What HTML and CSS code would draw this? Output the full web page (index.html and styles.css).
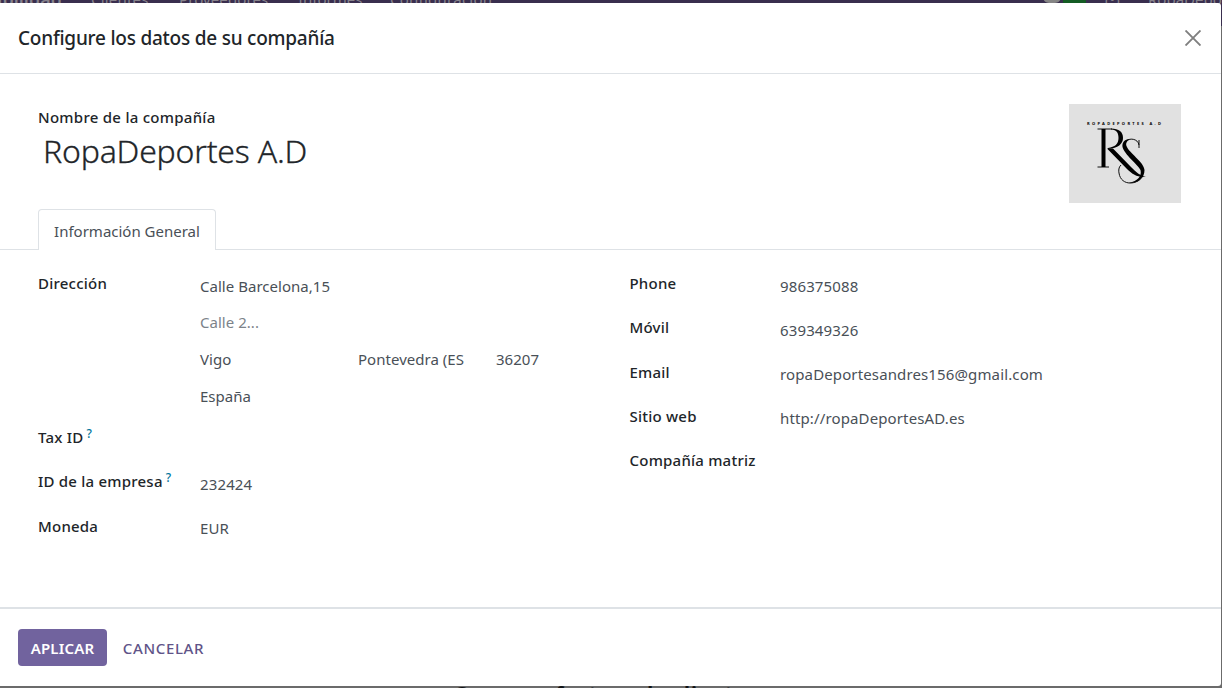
FILE: index.html
```html
<!DOCTYPE html>
<html lang="es">
<head>
<meta charset="utf-8">
<title>Configure los datos de su compañía</title>
<link rel="stylesheet" href="styles.css">
</head>
<body>
<div class="backdrop">
  <nav class="navbar">
    <span class="nav-item brand">Contabilidad</span>
    <span class="nav-item clients">Clientes</span>
    <span class="nav-item vendors">Proveedores</span>
    <span class="nav-item reports">Informes</span>
    <span class="nav-item settings">Configuración</span>
    <span class="chat-dot"></span><span class="badge"></span>
    <span class="nav-item clock">(•)</span>
    <span class="nav-item company">RopaDeportes</span>
  </nav>
  <div class="empty-title">Cree una factura de cliente</div>
</div>
<section class="modal">
  <header class="modal-header">
    <h4 class="modal-title">Configure los datos de su compañía</h4>
    <svg class="close" viewBox="0 0 16 16"><path d="M.5.5 15.5 15.5M15.5.5.5 15.5"/></svg>
  </header>
  <main class="modal-body">
    <div class="identity">
      <div>
        <div class="label name-label">Nombre de la compañía</div>
        <h1 class="name">RopaDeportes A.D</h1>
      </div>
      <svg class="logo" viewBox="0 0 112 99">
        <rect width="112" height="99" fill="#e1e1e1"/>
        <text class="logo-name" x="18" y="21" textLength="74">ROPADEPORTES A.D</text>
        <path class="thin" d="M28.500 25H43M28.500 63H40M70 44V36"/>
        <path class="stem" d="M34.500 25V63"/>
        <path d="M42 24.500C50 24.500 54 28 54 34C54 40 49 44 39 45V44C46 43 49.500 40 49.500 34C49.500 29 48 26 42 25.500Z"/>
        <path d="M38 44.500H44L62 63C67 68 71 72 77 72.500C70 74 64 71 58 65Z"/>
        <path class="thin" d="M70 41C69 34.500 60 33.500 57 37.500"/>
        <path d="M61 35C55 35 53 39 53.500 43C55 50 69 61 71.500 66C73 72 69 77 60 79C69 80 75.500 74 75.500 66C75 58 60 49 57.500 42C56.500 39 58 37 61 35Z"/>
        <path class="thin" d="M52 61C49.500 63 49.500 67 50 69C51 76 56 79 61 79C66 79 70 77 73 73"/>
      </svg>
    </div>
    <div class="tabs"><div class="tab">Información General</div></div>
    <div class="groups">
      <div class="group left">
        <div class="label">Dirección</div>
        <div class="address">
          <span class="value">Calle Barcelona,15</span>
          <span class="value placeholder">Calle 2...</span>
          <div class="city-row">
            <span class="value">Vigo</span><span class="value">Pontevedra (ES</span><span class="value">36207</span>
          </div>
          <span class="value">España</span>
        </div>
        <div class="label">Tax ID <sup>?</sup></div><div></div>
        <div class="label">ID de la empresa <sup>?</sup></div><div class="value">232424</div>
        <div class="label">Moneda</div><div class="value raised">EUR</div>
      </div>
      <div class="group right">
        <div class="label">Phone</div><div class="value">986375088</div>
        <div class="label">Móvil</div><div class="value">639349326</div>
        <div class="label">Email</div><div class="value raised">ropaDeportesandres156@gmail.com</div>
        <div class="label">Sitio web</div><div class="value raised">http://ropaDeportesAD.es</div>
        <div class="label">Compañía matriz</div><div></div>
      </div>
    </div>
  </main>
  <footer class="modal-footer">
    <button class="btn primary">APLICAR</button>
    <button class="btn link">CANCELAR</button>
  </footer>
</section>
</body>
</html>
```
FILE: styles.css
```css
* { box-sizing: border-box; }
body {
  margin: 0; width: 1222px; height: 688px; overflow: hidden;
  padding-top: 3px; background: #6b6b6b;
  font-family: "Noto Sans", "Open Sans", sans-serif; font-size: 15px; color: #212529;
}
.backdrop { position: absolute; inset: 0; overflow: hidden; }
.navbar { position: absolute; top: 0; left: 0; width: 100%; height: 26px; background: #392e4e; }
.nav-item { position: absolute; top: -11px; line-height: 20px; white-space: nowrap; color: #87838c; }
.brand { right: 1160px; font-size: 18px; font-weight: 600; }
.clients { left: 91px; letter-spacing: .2px; }
.vendors { left: 179px; letter-spacing: .1px; }
.reports { left: 298px; }
.settings { left: 390px; letter-spacing: .25px; }
.clock { left: 1105px; }
.company { left: 1148px; }
.chat-dot { position: absolute; left: 1043px; top: -9px; width: 18px; height: 12px; border-radius: 8px; background: #858585; }
.badge { position: absolute; left: 1063px; top: -10px; width: 23px; height: 13px; background: #145c24; }
.empty-title { position: absolute; left: 454px; top: 680px; font-size: 20px; font-weight: 700; line-height: 27px; letter-spacing: .9px; color: #101214; white-space: nowrap; }
.modal { position: relative; width: 1221px; height: 683px; display: flex; flex-direction: column; background: #fff; border-radius: 0 3px 3px 0; }
.modal-header { height: 71px; padding: 0 20px 0 18px; display: flex; align-items: center; justify-content: space-between; border-bottom: 1px solid #dee2e6; }
.modal-title { margin: 0; font-size: 19px; font-weight: 500; line-height: 28px; letter-spacing: -.23px; }
.close { width: 16px; height: 16px; fill: none; stroke: #7f7f7f; stroke-width: 1.9; }
.modal-body { flex: 1; }
.identity { height: 135px; padding: 30px 40px 0 38px; display: flex; justify-content: space-between; }
.label { font-size: 15px; font-weight: 500; line-height: 24px; letter-spacing: .22px; white-space: nowrap; }
.name-label { margin-top: 1px; letter-spacing: .27px; }
.name { margin: 0 0 0 5px; font-size: 32px; font-weight: 300; line-height: 43px; letter-spacing: -.2px; -webkit-text-stroke: .3px currentColor; }
.logo { width: 112px; height: 99px; }
.logo-name { font-size: 4px; font-weight: 700; }
.thin { fill: none; stroke: #111; stroke-width: 1; }
.stem { fill: none; stroke: #000; stroke-width: 4; }
.tabs { height: 41px; padding-left: 38px; border-bottom: 1px solid #dee2e6; }
.tab { width: 178px; height: 41px; border: 1px solid #dee2e6; border-bottom: 0; border-radius: 4px 4px 0 0; background: #fff; text-align: center; line-height: 43px; color: #495057; }
.groups { padding: 21px 38px 0; display: grid; grid-template-columns: 591.500px 1fr; }
.group { display: grid; align-content: start; }
.left { grid-template-columns: 162px 1fr; grid-template-rows: 154px 44px 45px 44px; }
.right { grid-template-columns: 150.500px 1fr; grid-template-rows: 44px 45px 44px 44px 44px; }
.value { display: block; padding-top: 3px; line-height: 24px; letter-spacing: .13px; color: #495057; white-space: nowrap; }
.value.raised { padding-top: 2px; }
.address { display: grid; grid-template-rows: 36px 37px 37px 37px; }
.address .value { letter-spacing: .03px; }
.address .placeholder { color: #7c838a; }
.city-row { display: grid; grid-template-columns: 158px 138px 1fr; }
sup { font-size: 12px; font-weight: 500; line-height: 0; color: #01769c; vertical-align: 5px; margin-left: -1px; }
.modal-footer { height: 79px; padding: 20px 18px 0; display: flex; align-items: flex-start; border-top: 2px solid #dee2e6; }
.btn { height: 37px; padding: 0; border: 0; border-radius: 4px; font-family: inherit; font-size: 15px; line-height: 39px; }
.primary { width: 89px; color: #fff; background: #71639e; font-weight: 600; letter-spacing: .2px; }
.link { width: 113px; color: #5f5488; background: transparent; font-weight: 500; letter-spacing: .65px; }
```
